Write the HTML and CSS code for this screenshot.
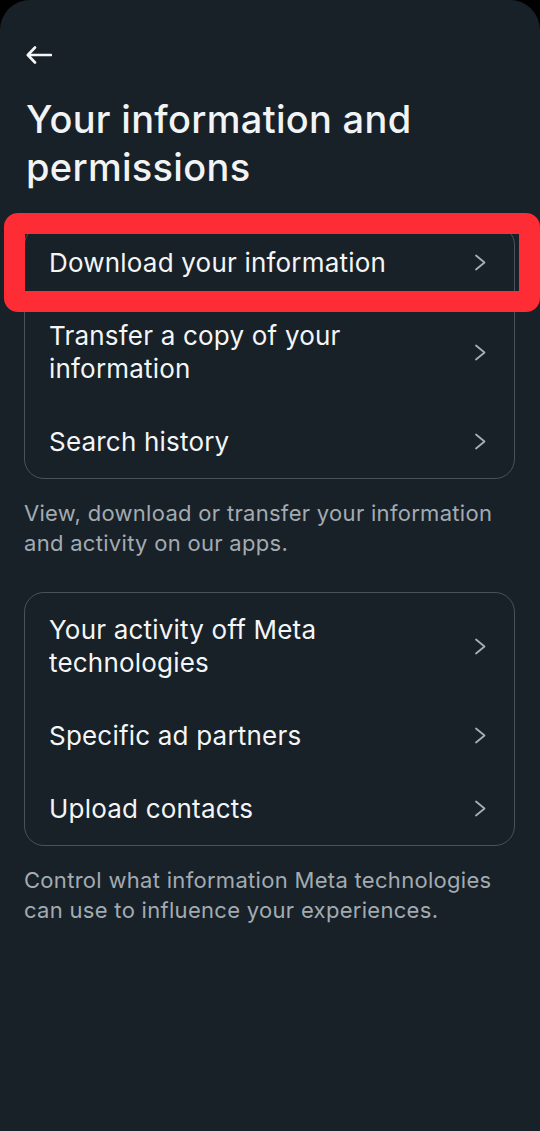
FILE: index.html
```html
<!DOCTYPE html>
<html lang="en">
<head>
    <meta charset="UTF-8">
    <meta name="viewport" content="width=device-width, initial-scale=1.0">
    <title>Your information and permissions</title>
    <link rel="stylesheet" href="styles.css">
</head>
<body>
    <div class="sheet">
        <div class="back">
            <svg width="26" height="18" viewBox="0 0 26 18">
                <path d="M25 9H2M9 1.5L1.8 9L9 16.5" fill="none" stroke="#f4f5f6" stroke-width="2.6" stroke-linecap="round" stroke-linejoin="round"/>
            </svg>
        </div>

        <h1>Your information and permissions</h1>

        <div class="card">
            <div class="row">
                <span>Download your information</span>
                <svg class="chevron" width="13" height="17" viewBox="0 0 13 17"><path d="M2 1.5L10.5 8.5L2 15.5" /></svg>
            </div>
            <div class="row">
                <span>Transfer a copy of your<br>information</span>
                <svg class="chevron" width="13" height="17" viewBox="0 0 13 17"><path d="M2 1.5L10.5 8.5L2 15.5" /></svg>
            </div>
            <div class="row">
                <span>Search history</span>
                <svg class="chevron" width="13" height="17" viewBox="0 0 13 17"><path d="M2 1.5L10.5 8.5L2 15.5" /></svg>
            </div>
        </div>
        <p class="note">View, download or transfer your information<br>and activity on our apps.</p>

        <div class="card">
            <div class="row">
                <span>Your activity off Meta<br>technologies</span>
                <svg class="chevron" width="13" height="17" viewBox="0 0 13 17"><path d="M2 1.5L10.5 8.5L2 15.5" /></svg>
            </div>
            <div class="row">
                <span>Specific ad partners</span>
                <svg class="chevron" width="13" height="17" viewBox="0 0 13 17"><path d="M2 1.5L10.5 8.5L2 15.5" /></svg>
            </div>
            <div class="row">
                <span>Upload contacts</span>
                <svg class="chevron" width="13" height="17" viewBox="0 0 13 17"><path d="M2 1.5L10.5 8.5L2 15.5" /></svg>
            </div>
        </div>
        <p class="note">Control what information Meta technologies<br>can use to influence your experiences.</p>

        <!-- red annotation box drawn over the first row -->
        <div class="highlight"></div>
    </div>
</body>
</html>
```

FILE: styles.css
```css
body {
    margin: 0;
    background-color: #000;
    font-family: Inter, "Noto Sans", sans-serif;
}
.sheet {
    position: relative;
    background-color: #182128;
    border-radius: 30px 30px 0 0;
    min-height: 1131px;
    box-sizing: border-box;
    padding: 38px 25px 0 24px;
    overflow: hidden;
}
.back {
    height: 34px;
    padding-left: 2px;
    display: flex;
    align-items: center;
}
h1 {
    margin: 23px 0 34px 2px;
    font-size: 38px;
    line-height: 48px;
    font-weight: 500;
    color: #f1f3f5;
    letter-spacing: 0.3px;
}
.card {
    border: 1px solid #48525b;
    border-radius: 20px;
}
.row {
    display: flex;
    justify-content: space-between;
    align-items: center;
    padding: 20px 27px 20px 24px;
    font-size: 26px;
    line-height: 33px;
    color: #f4f5f6;
    letter-spacing: 0.2px;
}
.chevron path {
    fill: none;
    stroke: #a7aeb5;
    stroke-width: 1.8;
    stroke-linecap: round;
    stroke-linejoin: round;
}
.note {
    margin: 19px 0 34px 0;
    font-size: 22px;
    line-height: 30px;
    color: #a3abb2;
    letter-spacing: 0.3px;
}
.highlight {
    position: absolute;
    top: 213px;
    left: 4px;
    width: 536px;
    height: 99px;
    box-sizing: border-box;
    border: 21px solid #fe2c35;
    border-radius: 14px;
}
```
